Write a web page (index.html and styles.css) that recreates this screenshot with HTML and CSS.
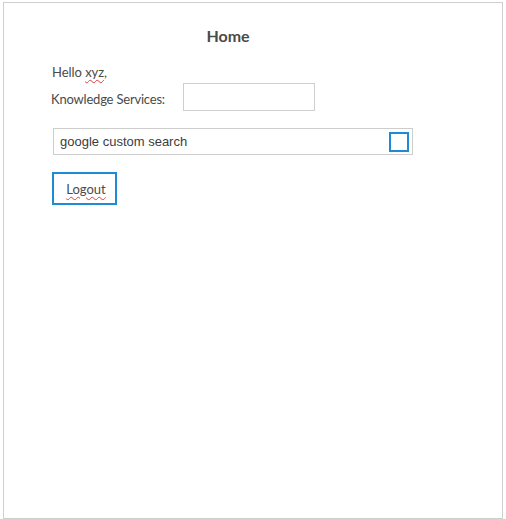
FILE: index.html
```html
<!DOCTYPE html>
<html>
<head>
<meta charset="utf-8">
<title>Home</title>
<link rel="stylesheet" href="styles.css">
</head>
<body>
<div class="frame">
  <div class="content">
    <h1 class="title">Home</h1>
    <div class="greeting">Hello <span class="misspelled">xyz</span>,</div>
    <div class="ks-row">
      <label class="ks-label">Knowledge Services:</label>
      <input class="ks-input" type="text">
    </div>
    <div class="search">
      <span class="search-text">google custom search</span>
      <span class="search-box"></span>
    </div>
    <button class="logout"><span class="misspelled">Logout</span></button>
  </div>
</div>
</body>
</html>
```
FILE: styles.css
```css
html, body {
  margin: 0;
  padding: 0;
  background: #ffffff;
}
.frame {
  margin: 2px 0 0 3px;
  width: 498px;
  height: 515px;
  border: 1px solid #cfcfcf;
  box-sizing: content-box;
}
.content {
  padding: 23px 0 0 47px;
  width: 360px;
  font-family: Lato, "Liberation Sans", sans-serif;
  color: #4a4a4a;
}
.title {
  margin: 0 0 18px 0;
  width: 354px;
  text-align: center;
  font-size: 16px;
  line-height: 20px;
  font-weight: 700;
  color: #4a4a4a;
}
.greeting {
  font-size: 13px;
  line-height: 16px;
  margin-left: 1px;
  letter-spacing: -0.05px;
}
.misspelled {
  text-decoration: underline wavy #e23b3b;
  text-decoration-thickness: 1px;
  text-underline-offset: 2px;
}
.ks-row {
  display: flex;
  align-items: flex-start;
  margin-top: 3px;
}
.ks-label {
  margin-top: 8px;
  width: 132px;
  font-size: 13px;
  line-height: 16px;
  letter-spacing: -0.2px;
}
.ks-input {
  margin: 0;
  padding: 0;
  width: 132px;
  height: 28px;
  box-sizing: border-box;
  border: 1px solid #cfcfcf;
  background: #fff;
}
.search {
  margin: 17px 0 0 2px;
  width: 360px;
  height: 27px;
  box-sizing: border-box;
  border: 1px solid #cdcdcd;
  display: flex;
  align-items: center;
  justify-content: space-between;
  padding: 0 3px 0 6px;
}
.search-text {
  font-family: "Liberation Sans", Arial, sans-serif;
  font-size: 13px;
  color: #3c3c3c;
}
.search-box {
  width: 20px;
  height: 20px;
  box-sizing: border-box;
  border: 2px solid #1f8bd5;
  margin-top: 1px;
}
.logout {
  display: block;
  margin: 17px 0 0 1px;
  width: 65px;
  height: 33px;
  padding: 0 0 0 3px;
  box-sizing: border-box;
  border: 2px solid #1f8bd5;
  background: #fff;
  font-family: Lato, "Liberation Sans", sans-serif;
  font-size: 13px;
  color: #4a4a4a;
}
```
